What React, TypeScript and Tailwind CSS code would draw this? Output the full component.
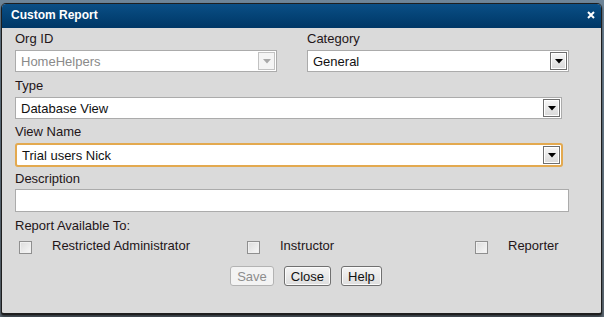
import React from "react";

const font = { fontFamily: '"Liberation Sans", Arial, sans-serif' };

function Arrow({ disabled }: { disabled?: boolean }) {
  return (
    <div
      className={
        "flex h-[18px] w-[17px] shrink-0 items-center justify-center border " +
        (disabled
          ? "border-[#c2c2c2] bg-[#f4f4f4]"
          : "border-[#6e6e6e] bg-gradient-to-b from-[#f7f7f7] to-[#d9d9d9] shadow-[inset_0_0_0_1px_#ffffff]")
      }
    >
      <svg width="8" height="5" viewBox="0 0 8 5">
        <path d="M0 0 H8 L4 4.5 Z" fill={disabled ? "#a8a8a8" : "#000"} />
      </svg>
    </div>
  );
}

function Select({
  value,
  className,
  disabled,
  focused,
}: {
  value: string;
  className: string;
  disabled?: boolean;
  focused?: boolean;
}) {
  return (
    <div
      className={
        "flex items-center bg-white pl-[5px] pr-[1px] " +
        (focused
          ? "h-[24px] rounded-[3px] border-2 border-[#e3a94f] pl-[4px] pr-[1px] "
          : "h-[22px] border border-[#ababab] ") +
        className
      }
    >
      <span
        className={
          "flex-1 text-[13px] leading-none " +
          (disabled ? "text-[#8a8a8a]" : "text-[#111]")
        }
      >
        {value}
      </span>
      <Arrow disabled={disabled} />
    </div>
  );
}

function Label({ children, className = "" }: { children: React.ReactNode; className?: string }) {
  return <div className={"h-[16px] text-[13px] leading-[16px] text-[#231518] " + className}>{children}</div>;
}

function Check() {
  return (
    <div className="h-[13px] w-[13px] border border-[#8f8f8f] bg-gradient-to-br from-[#dcdcdc] to-[#f8f8f8] shadow-[inset_0_0_0_1px_#f0f0f0]" />
  );
}

function Btn({ children, disabled }: { children: React.ReactNode; disabled?: boolean }) {
  return (
    <div
      className={
        "flex h-[20px] items-center rounded-[3px] border px-[6px] text-[13px] leading-none " +
        (disabled
          ? "border-[#b3b3b3] bg-[#f3f3f3] text-[#8d8d8d]"
          : "border-[#707070] bg-gradient-to-b from-[#f4f4f4] to-[#dedede] text-[#111] shadow-[inset_0_0_0_1px_#fbfbfb]")
      }
    >
      {children}
    </div>
  );
}

export default function App() {
  return (
    <div
      className="h-[317px] w-[604px] overflow-hidden bg-gradient-to-b from-[#6e8598] to-[#5e6a74] pl-[1px] pt-[3px]"
      style={font}
    >
      <div className="flex h-[312px] w-[601px] flex-col overflow-hidden rounded-t-[5px] rounded-b-[3px] border border-[#1e1e1e] border-b-2 bg-[#dadada] shadow-[0_2px_3px_rgba(0,0,0,0.5)]">
        <div className="flex h-[24px] shrink-0 items-center justify-between bg-gradient-to-b from-[#0b4f86] to-[#003766] pl-[9px] pr-[6px]">
          <span className="text-[12px] font-bold leading-none text-white pb-[3px]">Custom Report</span>
          <svg width="8" height="8" viewBox="0 0 8 8" className="mb-[3px]">
            <path d="M1 1 L7 7 M7 1 L1 7" stroke="#fff" strokeWidth="2" />
          </svg>
        </div>
        <div className="flex flex-col pl-[13px] pt-[3px]">
          <div className="flex gap-[30px]">
            <div className="flex flex-col gap-[3px]">
              <Label>Org ID</Label>
              <Select value="HomeHelpers" className="w-[262px]" disabled />
            </div>
            <div className="flex flex-col gap-[3px]">
              <Label>Category</Label>
              <Select value="General" className="w-[262px]" />
            </div>
          </div>
          <Label className="mt-[6px]">Type</Label>
          <Select value="Database View" className="mt-[3px] w-[547px]" />
          <Label className="mt-[5px]">View Name</Label>
          <Select value="Trial users Nick" className="mt-[3px] w-[548px]" focused />
          <Label className="mt-[4px]">Description</Label>
          <div className="mt-[2px] h-[23px] w-[554px] border border-[#ababab] bg-white" />
          <Label className="mt-[6px]">Report Available To:</Label>
          <div className="mt-[4px] grid grid-cols-[228px_228px_auto] pl-[4px] text-[13px] leading-[16px] text-[#231518]">
            <div className="flex items-start gap-[20px]">
              <div className="pt-[3px]"><Check /></div>
              <span>Restricted Administrator</span>
            </div>
            <div className="flex items-start gap-[20px]">
              <div className="pt-[3px]"><Check /></div>
              <span>Instructor</span>
            </div>
            <div className="flex items-start gap-[20px]">
              <div className="pt-[3px]"><Check /></div>
              <span>Reporter</span>
            </div>
          </div>
          <div className="mt-[12px] flex justify-center gap-[10px] pr-[4px]">
            <Btn disabled>Save</Btn>
            <Btn>Close</Btn>
            <Btn>Help</Btn>
          </div>
        </div>
      </div>
    </div>
  );
}
